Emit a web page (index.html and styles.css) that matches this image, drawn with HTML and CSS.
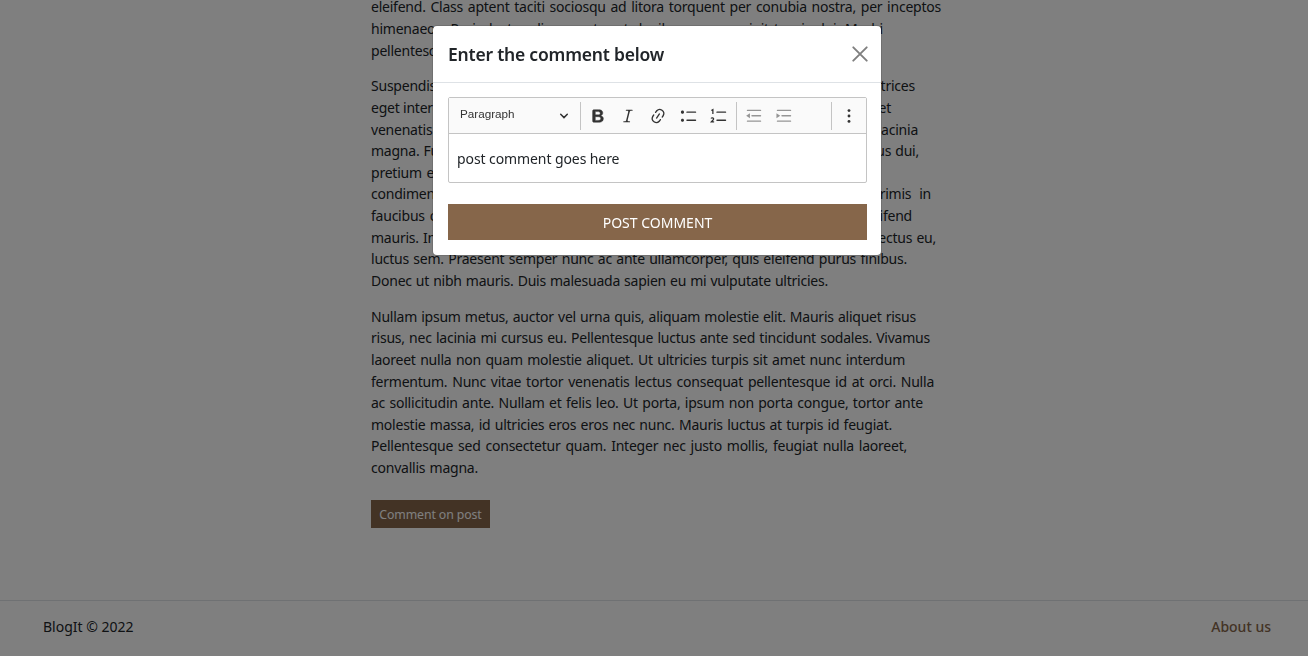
FILE: index.html
```html
<!DOCTYPE html>
<html lang="en">
<head>
<meta charset="utf-8">
<title>BlogIt</title>
<link rel="stylesheet" href="styles.css">
</head>
<body>
<main class="post">
  <p>
    <span class="line" style="width:570px">eleifend. Class aptent taciti sociosqu ad litora torquent per conubia nostra, per inceptos</span>
    <span class="line" style="width:512px">himenaeos. Proin luctus diam eget erat dapibus, nec suscipit turpis dui. Morbi</span>
    <span class="line" style="width:480px">pellentesque lorem sed justo feugiat, vitae porta nisl luctus. Sed id velit.</span>
  </p>
  <p>
    <span class="line" style="width:544px">Suspendisse potenti. Vivamus ut felis sed arcu congue posuere. Integer in nisl ultrices</span>
    <span class="line" style="width:520px">eget interdum vel, mattis at nibh. Praesent vitae nulla nec dolor semper rutrum et</span>
    <span class="line" style="width:542px">venenatis quam. Curabitur non sem at nisi commodo gravida. Sed ac turpis sed lacinia</span>
    <span class="line" style="width:548px">magna. Fusce sed lorem vitae elit laoreet porttitor. Aenean tempus odio nec risus dui,</span>
    <span class="line" style="width:490px">pretium efficitur sapien egestas non. Nunc a mi vel mauris blandit pharetra</span>
    <span class="line" style="width:560px">condimentum. Vestibulum vitae tellus ut mi elit. Vestibulum ante ipsum primis in</span>
    <span class="line" style="width:541px">faucibus orci luctus et ultrices posuere cubilia curae; Donec non turpis sed eleifend</span>
    <span class="line" style="width:565px">mauris. In hac habitasse platea dictumst. Nulla facilisi. Aliquam erat sapien, in lectus eu,</span>
    <span class="line" style="width:536px">luctus sem. Praesent semper nunc ac ante ullamcorper, quis eleifend purus finibus.</span>
    <span class="line" style="width:457px">Donec ut nibh mauris. Duis malesuada sapien eu mi vulputate ultricies.</span>
  </p>
  <p>
    <span class="line" style="width:545px">Nullam ipsum metus, auctor vel urna quis, aliquam molestie elit. Mauris aliquet risus</span>
    <span class="line" style="width:559px">risus, nec lacinia mi cursus eu. Pellentesque luctus ante sed tincidunt sodales. Vivamus</span>
    <span class="line" style="width:534px">laoreet nulla non quam molestie aliquet. Ut ultricies turpis sit amet nunc interdum</span>
    <span class="line" style="width:563px">fermentum. Nunc vitae tortor venenatis lectus consequat pellentesque id at orci. Nulla</span>
    <span class="line" style="width:552px">ac sollicitudin ante. Nullam et felis leo. Ut porta, ipsum non porta congue, tortor ante</span>
    <span class="line" style="width:521px">molestie massa, id ultricies eros eros nec nunc. Mauris luctus at turpis id feugiat.</span>
    <span class="line" style="width:536px">Pellentesque sed consectetur quam. Integer nec justo mollis, feugiat nulla laoreet,</span>
    <span class="line" style="width:107px">convallis magna.</span>
  </p>
  <button class="comment-btn">Comment on post</button>
</main>
<footer class="footer"><span class="copy">BlogIt © 2022</span><a class="about">About us</a></footer>

<div class="backdrop">
  <section class="modal">
    <header class="modal-header">
      <h5 class="modal-title">Enter the comment below</h5>
      <svg class="close" width="16" height="16" viewBox="0 0 16 16"><path d="M1.3 1.3 14.7 14.7M14.7 1.3 1.3 14.7" fill="none" stroke="#7f7f7f" stroke-width="1.9" stroke-linecap="round"/></svg>
    </header>
    <div class="modal-body">
      <div class="editor">
        <div class="toolbar">
          <div class="heading"><span class="heading-label">Paragraph</span>
            <svg width="10" height="10" viewBox="0 0 10 10"><path d="M1.7 3.2 5 6.6 8.3 3.2" fill="none" stroke="#333" stroke-width="1.5" stroke-linecap="round"/></svg>
          </div>
          <i class="sep"></i>
          <div class="group">
          <svg class="tool" viewBox="0 0 20 20"><path fill="#333" stroke="#333" stroke-width=".5" d="M10.187 17H5.773c-.637 0-1.092-.138-1.364-.415-.273-.277-.409-.718-.409-1.323V4.738c0-.617.14-1.062.419-1.332.279-.27.73-.406 1.354-.406h4.68c.69 0 1.288.041 1.793.124.506.083.96.242 1.36.478.341.197.644.447.906.75a3.262 3.262 0 0 1 .808 2.162c0 1.401-.722 2.426-2.167 3.075C15.05 10.175 16 11.315 16 13.01a3.756 3.756 0 0 1-2.296 3.504 6.1 6.1 0 0 1-1.517.377c-.571.073-1.238.11-2 .11zm-.217-6.217H7v4.087h3.069c1.977 0 2.965-.69 2.965-2.072 0-.707-.256-1.22-.768-1.537-.512-.319-1.277-.478-2.296-.478zM7 5.13v3.619h2.606c.729 0 1.292-.067 1.69-.2a1.6 1.6 0 0 0 .91-.765c.165-.267.247-.566.247-.897 0-.707-.26-1.176-.778-1.409-.519-.232-1.31-.348-2.375-.348H7z"/></svg>
          <svg class="tool" viewBox="0 0 20 20"><path fill="#333" d="m9.586 14.633.021.004c-.036.335.095.655.393.962.082.083.173.15.274.201h1.474a.6.6 0 1 1 0 1.2H5.304a.6.6 0 0 1 0-1.2h1.15c.474-.07.809-.182 1.005-.334.157-.122.291-.32.404-.597l2.416-9.55a1.053 1.053 0 0 0-.281-.823 1.12 1.12 0 0 0-.442-.296H8.15a.6.6 0 0 1 0-1.2h6.443a.6.6 0 1 1 0 1.2h-1.195c-.376.056-.65.155-.823.296-.215.175-.423.439-.623.79l-2.366 9.347z"/></svg>
          <svg class="tool" viewBox="0 0 20 20"><path fill="#333" d="m11.077 15 .991-1.416a.75.75 0 1 1 1.229.86l-1.148 1.64a.748.748 0 0 1-.217.206 5.251 5.251 0 0 1-8.503-5.955.741.741 0 0 1 .12-.274l1.147-1.639a.75.75 0 1 1 1.228.86L4.933 10.7l.006.003a3.75 3.75 0 0 0 6.132 4.294l.006.004zm5.494-5.335a.748.748 0 0 1-.12.274l-1.147 1.639a.75.75 0 1 1-1.228-.86l.86-1.23a3.75 3.75 0 0 0-6.144-4.301l-.86 1.229a.75.75 0 0 1-1.229-.86l1.148-1.64a.748.748 0 0 1 .217-.206 5.251 5.251 0 0 1 8.503 5.955zm-4.563-2.532a.75.75 0 0 1 .184 1.045l-3.155 4.505a.75.75 0 1 1-1.229-.86l3.155-4.506a.75.75 0 0 1 1.045-.184z"/></svg>
          <svg class="tool" viewBox="0 0 20 20"><path fill="#333" d="M7 5.75c0 .414.336.75.75.75h9.5a.75.75 0 1 0 0-1.5h-9.5a.75.75 0 0 0-.75.75zm-6 0C1 4.784 1.777 4 2.75 4c.966 0 1.75.777 1.75 1.75 0 .966-.777 1.75-1.75 1.75C1.784 7.5 1 6.723 1 5.75zm6 9c0 .414.336.75.75.75h9.5a.75.75 0 1 0 0-1.5h-9.5a.75.75 0 0 0-.75.75zm-6 0c0-.966.777-1.75 1.75-1.75.966 0 1.75.777 1.75 1.75 0 .966-.777 1.75-1.75 1.75-.966 0-1.75-.777-1.75-1.75z"/></svg>
          <svg class="tool" viewBox="0 0 20 20"><path fill="#333" d="M7 5.75c0 .414.336.75.75.75h9.5a.75.75 0 1 0 0-1.5h-9.5a.75.75 0 0 0-.75.75zm0 9c0 .414.336.75.75.75h9.5a.75.75 0 1 0 0-1.5h-9.5a.75.75 0 0 0-.75.75z"/><path d="M1.5 3.9 3.2 2.9V7.800M1.2 12.9c.5-1.2 3-1.1 2.8.5C3.9 14.5 2.3 15.500 1.400 16.600H4.600" fill="none" stroke="#333" stroke-width="1.4"/></svg>
          </div>
          <i class="sep"></i>
          <div class="group">
          <svg class="tool off" viewBox="0 0 20 20"><path fill="#333" d="M2 3.750c0 .414.336.75.75.75h14.500a.75.75 0 1 0 0-1.500H2.750a.75.75 0 0 0-.75.75zm5 6c0 .414.336.75.75.75h9.500a.75.75 0 1 0 0-1.500h-9.500a.75.75 0 0 0-.75.75zm-5 6c0 .414.336.75.75.75h14.500a.75.75 0 1 0 0-1.500H2.750a.75.75 0 0 0-.75.75zM5.500 7v5.500L1.300 9.750z"/></svg>
          <svg class="tool off" viewBox="0 0 20 20"><path fill="#333" d="M2 3.750c0 .414.336.75.75.75h14.500a.75.75 0 1 0 0-1.500H2.750a.75.75 0 0 0-.75.75zm5 6c0 .414.336.75.75.75h9.500a.75.75 0 1 0 0-1.500h-9.500a.75.75 0 0 0-.75.75zm-5 6c0 .414.336.75.75.75h14.500a.75.75 0 1 0 0-1.500H2.750a.75.75 0 0 0-.75.75zM1.600 7v5.500L5.800 9.750z"/></svg>
          </div>
          <i class="sep last"></i>
          <svg class="tool more" viewBox="0 0 20 20"><g fill="#333"><circle cx="10" cy="4" r="1.600"/><circle cx="10" cy="10" r="1.600"/><circle cx="10" cy="16" r="1.600"/></g></svg>
        </div>
        <div class="content"><span class="typed">post comment goes here</span></div>
      </div>
      <button class="submit">POST COMMENT</button>
    </div>
  </section>
</div>
</body>
</html>
```
FILE: styles.css
```css
* { box-sizing: border-box; }
html, body { height: 100%; }
body {
  margin: 0;
  overflow: hidden;
  background: #fff;
  color: #212529;
  font: 14px/21.6px "Noto Sans", "Open Sans", sans-serif;
  display: flex;
  flex-direction: column;
}
.post { width: 572px; height: 600px; margin-left: 371px; }
.post p { margin: 0 0 14.4px; }
.post p:first-child { margin-top: -3.7px; }
.line {
  display: block;
  white-space: nowrap;
  letter-spacing: -0.23px;
  text-align: justify;
  text-align-last: justify;
}
button { display: block; border: 0; border-radius: 0; font-family: inherit; background: #86664a; color: #fff; }
.comment-btn { width: 119px; height: 28px; margin-top: 21.500px; padding: 0; font-size: 12.300px; letter-spacing: -0.1px; white-space: nowrap; }
.footer {
  height: 56px;
  border-top: 1px solid #dee2e6;
  padding: 0 37px 3px 43px;
  display: flex;
  align-items: center;
  justify-content: space-between;
}
.about { color: #86664a; font-weight: 500; }
.backdrop {
  position: fixed;
  inset: 0;
  background: rgba(0, 0, 0, .5);
  display: flex;
  justify-content: center;
  align-items: flex-start;
  padding: 26px 0 0 6px;
}
.modal { width: 448px; height: 229px; background: #fff; border-radius: 4px; box-shadow: 0 0 0 1px rgba(0,0,0,.12); }
.modal-header {
  height: 57px;
  border-bottom: 1px solid #dee2e6;
  padding: 0 13.500px 0 15px;
  display: flex;
  align-items: center;
  justify-content: space-between;
}
.modal-title { margin: 2px 0 0; font-size: 17.500px; font-weight: 600; letter-spacing: -0.21px; }
.modal-body { padding: 14px 14px 15px 15px; }
.editor { height: 86px; border: 1px solid #c4c4c4; border-radius: 2px; }
.toolbar { height: 36px; background: #fafafa; border-bottom: 1px solid #c4c4c4; display: flex; align-items: center; }
.heading { width: 131px; padding: 0 11px; display: flex; align-items: center; justify-content: space-between; color: #333; font: 11.700px/16px "Liberation Sans", Arial, sans-serif; }
.heading-label { margin-top: -4px; }
.group { display: flex; gap: 12.400px; padding: 0 8.300px 0 7.600px; }
.sep { width: 1px; height: 28px; background: #c4c4c4; }
.tool { width: 18px; height: 18px; flex: none; }
.off { opacity: .5; }
.sep.last { margin-left: auto; }
.more { margin: 0 8px; }
.content { height: 48px; padding: 14px 8px; }
.typed { letter-spacing: -0.09px; }
.submit { width: 419px; height: 36px; margin-top: 21px; padding: 1px 0 0; font-size: 14px; letter-spacing: 0; }
```
